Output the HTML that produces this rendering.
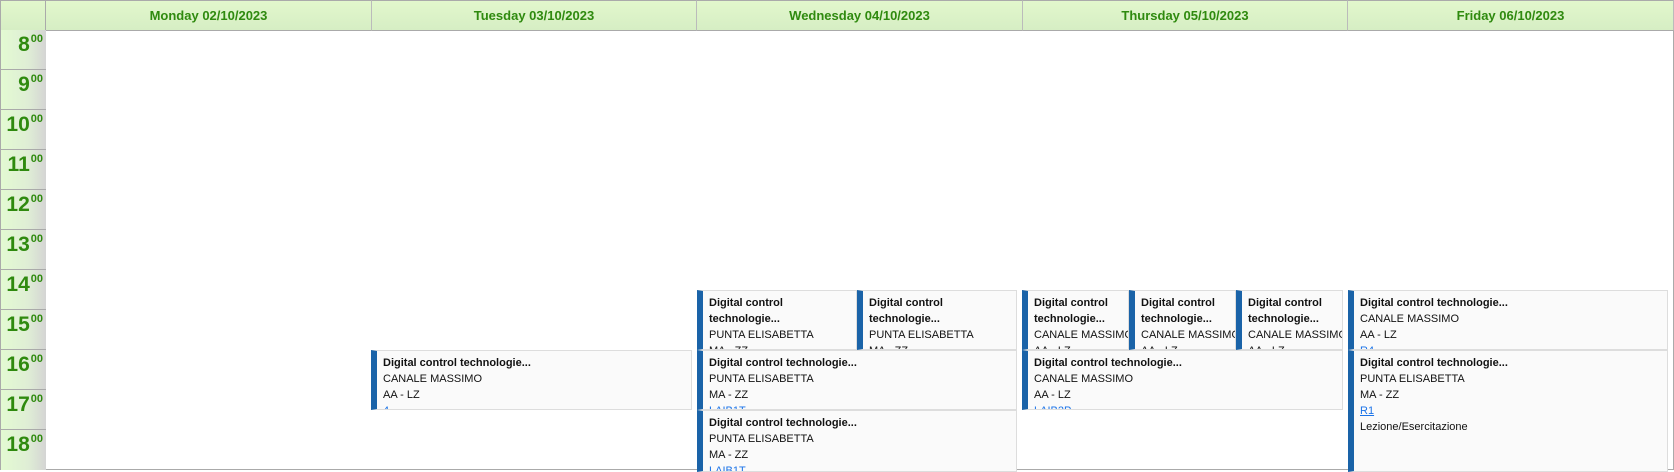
<!DOCTYPE html>
<html><head><meta charset="utf-8"><style>
*{margin:0;padding:0;box-sizing:border-box}
body{width:1674px;height:470px;overflow:hidden;background:#fff;font-family:"Liberation Sans","DejaVu Sans",sans-serif;position:relative}
.hdr{position:absolute;top:0;height:31px;background:linear-gradient(#e2f7cc,#d6eec4);border-top:1px solid #aaa;border-bottom:1px solid #aaa;border-right:1px solid #bbb;color:#2f8a0f;font-weight:bold;font-size:13px;text-align:center;line-height:30px}
.corner{position:absolute;left:0;top:0;width:46px;height:31px;background:linear-gradient(#e2f7cc,#d6eec4);border:1px solid #aaa}
.tc{position:absolute;left:0;top:30px;width:46px;height:440px;border:1px solid #aaa;border-top:none}
.hr{position:absolute;left:0;width:45px;height:40px;background:linear-gradient(90deg,#e3fad2,#dfeed5 60%,#d4d4d4);border-bottom:1px solid #aaa;color:#2f8a0f;font-weight:bold;font-size:21px;text-align:right;padding-right:3px;padding-top:4px;line-height:22px}
.hr sup{font-size:11px;vertical-align:top;line-height:14px;position:relative;top:-2px;margin-left:1px}
.grid{position:absolute;left:45px;top:30px;width:1629px;height:440px;border:1px solid #aaa;border-top:none;border-left:none}
.ev{position:absolute;background:#fafafa;border:1px solid #ddd;border-left:6px solid #1a63a8;overflow:hidden;font-size:11px;line-height:16px;color:#111;padding:4px 0 0 6px;white-space:nowrap}
.ev b{display:block}
.ev a{color:#1a73e8;text-decoration:underline}
</style></head><body>
<div class="corner"></div>
<div class="hdr" style="left:46px;width:326px">Monday 02/10/2023</div>
<div class="hdr" style="left:372px;width:325px">Tuesday 03/10/2023</div>
<div class="hdr" style="left:697px;width:326px">Wednesday 04/10/2023</div>
<div class="hdr" style="left:1023px;width:325px">Thursday 05/10/2023</div>
<div class="hdr" style="left:1348px;width:326px">Friday 06/10/2023</div>
<div class="grid"></div>
<div class="tc">
<div class="hr" style="top:0">8<sup>00</sup></div>
<div class="hr" style="top:40px">9<sup>00</sup></div>
<div class="hr" style="top:80px">10<sup>00</sup></div>
<div class="hr" style="top:120px">11<sup>00</sup></div>
<div class="hr" style="top:160px">12<sup>00</sup></div>
<div class="hr" style="top:200px">13<sup>00</sup></div>
<div class="hr" style="top:240px">14<sup>00</sup></div>
<div class="hr" style="top:280px">15<sup>00</sup></div>
<div class="hr" style="top:320px">16<sup>00</sup></div>
<div class="hr" style="top:360px">17<sup>00</sup></div>
<div class="hr" style="top:400px;border-bottom:none">18<sup>00</sup></div>
</div>

<div class="ev" style="left:371px;top:350px;width:321px;height:60px"><b>Digital control technologie...</b>CANALE MASSIMO<br>AA - LZ<br><a>4</a></div>

<div class="ev" style="left:697px;top:290px;width:160px;height:60px"><b>Digital control<br>technologie...</b>PUNTA ELISABETTA<br>MA - ZZ</div>
<div class="ev" style="left:857px;top:290px;width:160px;height:60px"><b>Digital control<br>technologie...</b>PUNTA ELISABETTA<br>MA - ZZ</div>
<div class="ev" style="left:697px;top:350px;width:320px;height:60px"><b>Digital control technologie...</b>PUNTA ELISABETTA<br>MA - ZZ<br><a>LAIB1T</a></div>
<div class="ev" style="left:697px;top:410px;width:320px;height:62px"><b>Digital control technologie...</b>PUNTA ELISABETTA<br>MA - ZZ<br><a>LAIB1T</a></div>

<div class="ev" style="left:1022px;top:290px;width:107px;height:60px"><b>Digital control<br>technologie...</b>CANALE MASSIMO<br>AA - LZ</div>
<div class="ev" style="left:1129px;top:290px;width:107px;height:60px"><b>Digital control<br>technologie...</b>CANALE MASSIMO<br>AA - LZ</div>
<div class="ev" style="left:1236px;top:290px;width:107px;height:60px"><b>Digital control<br>technologie...</b>CANALE MASSIMO<br>AA - LZ</div>
<div class="ev" style="left:1022px;top:350px;width:321px;height:60px"><b>Digital control technologie...</b>CANALE MASSIMO<br>AA - LZ<br><a>LAIB2P</a></div>

<div class="ev" style="left:1348px;top:290px;width:320px;height:60px"><b>Digital control technologie...</b>CANALE MASSIMO<br>AA - LZ<br><a>R4</a></div>
<div class="ev" style="left:1348px;top:350px;width:320px;height:122px"><b>Digital control technologie...</b>PUNTA ELISABETTA<br>MA - ZZ<br><a>R1</a><br>Lezione/Esercitazione</div>
</body></html>
